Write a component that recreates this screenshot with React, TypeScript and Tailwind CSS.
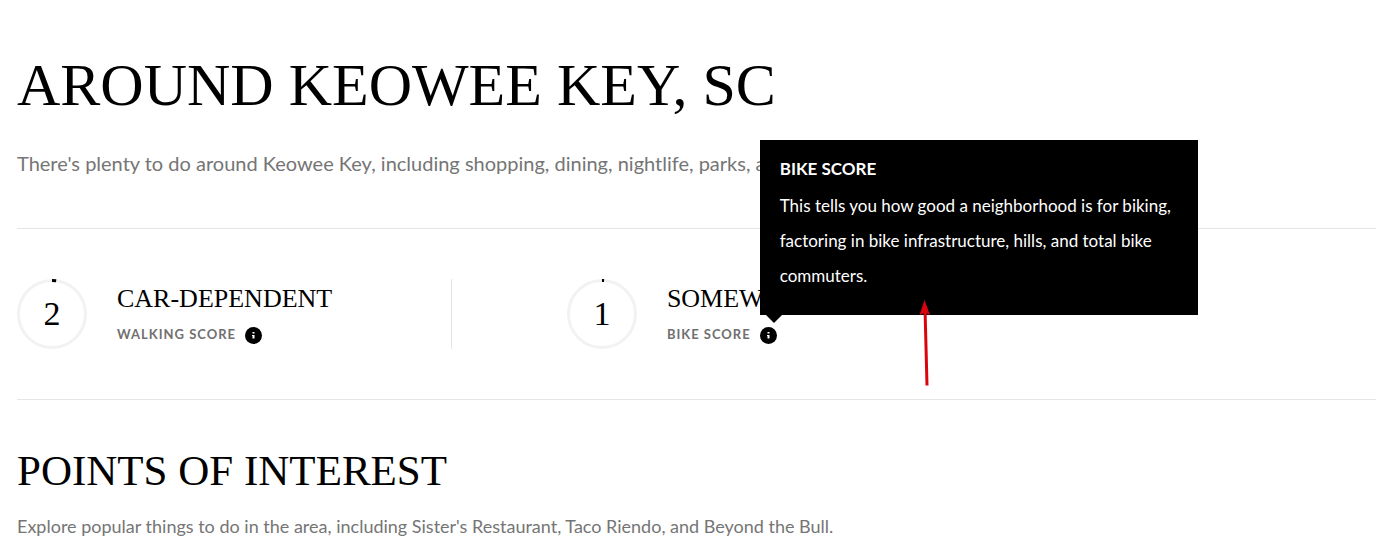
import { useState } from 'react'

interface Score {
  id: string
  value: number
  rating: string
  label: string
  description: string
}

const scores: Score[] = [
  {
    id: 'walk',
    value: 2,
    rating: 'Car-Dependent',
    label: 'Walking Score',
    description: 'This tells you how easy it is to run daily errands on foot.',
  },
  {
    id: 'bike',
    value: 1,
    rating: 'Somewhat Bikeable',
    label: 'Bike Score',
    description:
      'This tells you how good a neighborhood is for biking, factoring in bike infrastructure, hills, and total bike commuters.',
  },
]

const RADIUS = 33.5
const CIRCUMFERENCE = 2 * Math.PI * RADIUS

function ScoreRing({ value }: { value: number }) {
  return (
    <div className="relative flex size-[70px] shrink-0 items-center justify-center">
      <svg className="absolute inset-0 size-full" viewBox="0 0 70 70" fill="none" aria-hidden>
        <circle cx="35" cy="35" r={RADIUS} stroke="#f2f2f2" strokeWidth="3" />
        <circle
          cx="35"
          cy="35"
          r={RADIUS}
          stroke="#000"
          strokeWidth="3"
          strokeDasharray={`${(value / 100) * CIRCUMFERENCE} ${CIRCUMFERENCE}`}
          transform="rotate(-90 35 35)"
        />
      </svg>
      <span className="text-[34px] leading-[70px]">{value}</span>
    </div>
  )
}

function InfoIcon() {
  return (
    <svg className="size-[17px]" viewBox="0 0 17 17" aria-hidden>
      <circle cx="8.5" cy="8.5" r="8.5" fill="#000" />
      <path d="M7.500 5h2v1.500h-2zM7 8h2.500v3.500h-2V9H7z" fill="#fff" />
    </svg>
  )
}

function Tooltip({ id, title, children }: { id: string; title: string; children: string }) {
  return (
    <div
      id={id}
      role="tooltip"
      className="absolute bottom-[29px] left-0 z-10 w-[438px] bg-black px-5 pt-3 pb-[22px] font-[Lato,sans-serif] text-[17px] text-white"
    >
      <h4 className="mb-0.5 leading-[34px] font-bold uppercase">{title}</h4>
      <p className="leading-[35px]">{children}</p>
      <svg className="absolute top-full left-[6px] h-2 w-4" viewBox="0 0 16 8" aria-hidden>
        <path d="M0 0h16L8 8z" fill="#000" />
      </svg>
      <svg
        className="absolute top-40 left-[159px] h-[86px] w-3"
        viewBox="0 0 12 86"
        aria-hidden
      >
        <path d="M6 8L8 85.500" stroke="#d9040c" strokeWidth="3" />
        <path d="M5.500 0L11 15L6 12.500L0.500 15z" fill="#d9040c" />
      </svg>
    </div>
  )
}

export default function App() {
  const [openId, setOpenId] = useState('bike')

  return (
    <main className="overflow-x-hidden bg-white pt-[50px] pl-[17px] font-['Liberation_Serif',serif] text-black">
      <h1 className="text-[60px] leading-[70px] uppercase">Around Keowee Key, SC</h1>
      <p className="mt-7 font-[Lato,sans-serif] text-[20px] leading-[30px] text-[#757575]">
        There's plenty to do around Keowee Key, including shopping, dining, nightlife, parks, and more.
      </p>

      <section className="mt-[50px] flex border-y border-[#e5e5e5] py-[50px]">
        {scores.map((score) => (
          <div
            key={score.id}
            className="flex w-[32%] gap-[30px] border-[#e5e5e5] first:border-r last:ml-[115px]"
          >
            <ScoreRing value={score.value} />
            <div className="pt-1">
              <h3 className="text-[26px] leading-8 whitespace-nowrap uppercase">{score.rating}</h3>
              <div className="mt-2 flex items-center gap-[9px]">
                <span className="pb-0.5 font-[Lato,sans-serif] text-[13px] leading-[22px] font-bold tracking-[1px] whitespace-nowrap text-[#707070] uppercase">
                  {score.label}
                </span>
                <div className="relative">
                  <button
                    type="button"
                    className="block"
                    aria-label={`About the ${score.label}`}
                    aria-describedby={openId === score.id ? `${score.id}-tip` : undefined}
                    onClick={() => setOpenId(openId === score.id ? '' : score.id)}
                  >
                    <InfoIcon />
                  </button>
                  {openId === score.id && (
                    <Tooltip id={`${score.id}-tip`} title={score.label}>
                      {score.description}
                    </Tooltip>
                  )}
                </div>
              </div>
            </div>
          </div>
        ))}
      </section>

      <h2 className="mt-[46px] text-[43px] leading-[50px] uppercase">Points of Interest</h2>
      <p className="mt-[15px] font-[Lato,sans-serif] text-[18px] leading-[30px] text-[#757575]">
        Explore popular things to do in the area, including Sister's Restaurant, Taco Riendo, and Beyond the Bull.
      </p>
    </main>
  )
}
